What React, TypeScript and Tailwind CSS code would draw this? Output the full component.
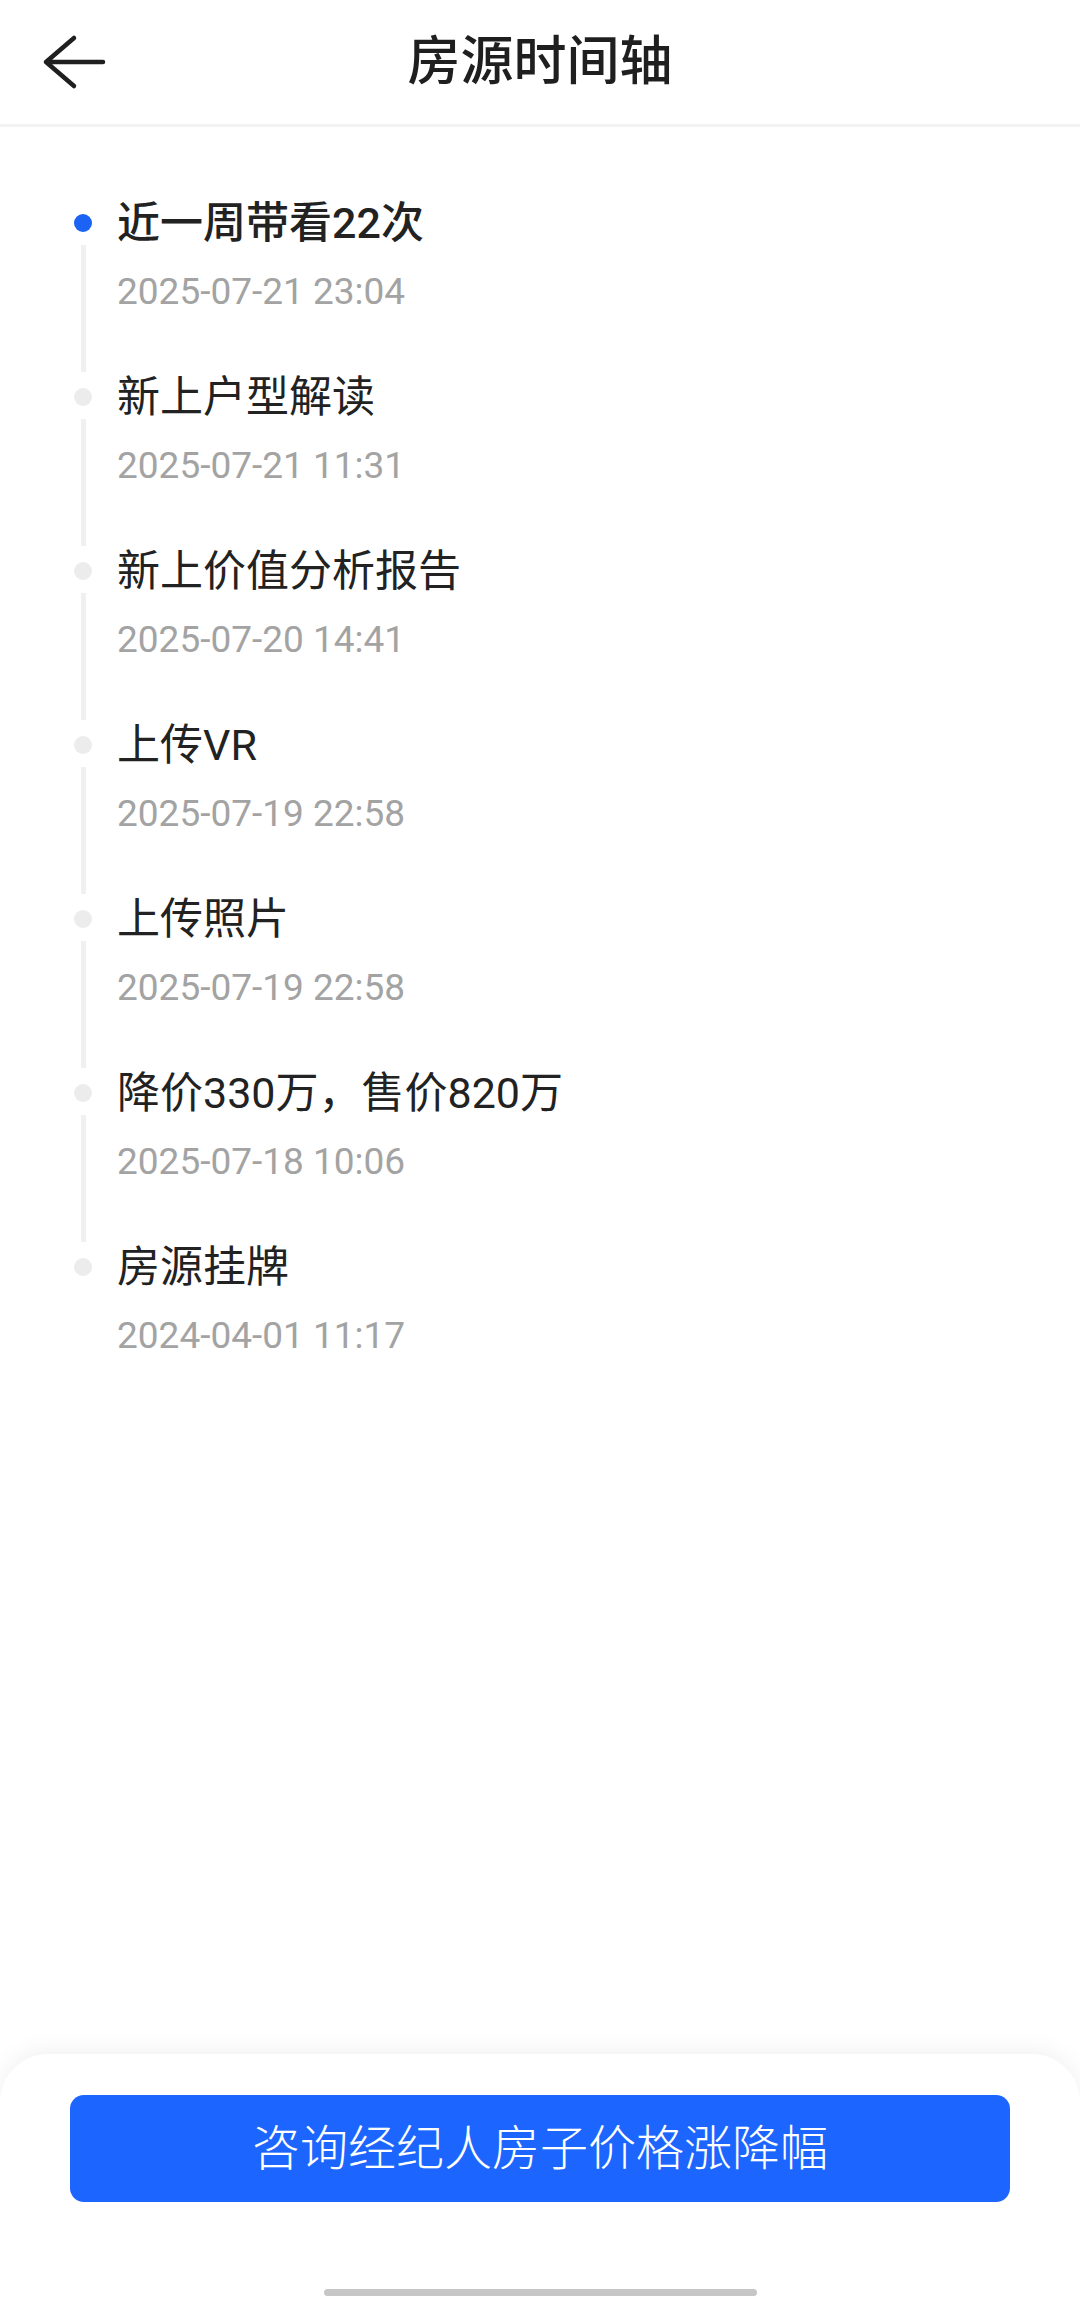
import React from "react";

const items = [
  { title: "近一周带看22次", date: "2025-07-21 23:04", active: true },
  { title: "新上户型解读", date: "2025-07-21 11:31" },
  { title: "新上价值分析报告", date: "2025-07-20 14:41" },
  { title: "上传VR", date: "2025-07-19 22:58" },
  { title: "上传照片", date: "2025-07-19 22:58" },
  { title: "降价330万，售价820万", date: "2025-07-18 10:06" },
  { title: "房源挂牌", date: "2024-04-01 11:17" },
];

const font = { fontFamily: "Roboto, 'Noto Sans CJK SC', sans-serif" };

export default function App() {
  return (
    <div className="w-[1080px] h-[2299px] bg-white flex flex-col overflow-hidden" style={font}>
      <header className="h-[127px] border-b-[3px] border-[#f3f3f3] grid grid-cols-[1fr_auto_1fr] items-center">
        <div className="pl-[42px] flex items-center">
          <svg width="64" height="56" viewBox="0 0 64 56" fill="none" stroke="#1f1f1f" strokeWidth="4.5" strokeLinecap="round" strokeLinejoin="round">
            <path d="M4 28 H61 M4 28 L32 4 M4 28 L32 52" />
          </svg>
        </div>
        <h1 className="text-[53px] font-medium text-[#1f1f1f] leading-none">房源时间轴</h1>
        <div />
      </header>

      <main className="flex-1 pt-[70px] pl-[74px]">
        {items.map((it, i) => {
          const last = i === items.length - 1;
          return (
            <div key={i} className="flex h-[174px]">
              <div className="w-[18px] flex flex-col items-center">
                <div className={`mt-[17px] w-[18px] h-[18px] rounded-full ${it.active ? "bg-[#1a63f5]" : "bg-[#ececec]"}`} />
                {!last && <div className="mt-[13px] w-[5px] flex-1 bg-[#f0f0f0] mb-[-1px]" />}
              </div>
              <div className="ml-[25px] flex flex-col">
                <div className={`text-[43px] leading-[52px] text-[#222222] ${it.active ? "font-medium" : "font-normal"}`}>{it.title}</div>
                <div className="mt-[21px] text-[37px] leading-[44px] text-[#a3a3a3]">{it.date}</div>
              </div>
            </div>
          );
        })}
      </main>

      <footer className="h-[245px] rounded-t-[48px] bg-white shadow-[0_-4px_24px_rgba(0,0,0,0.06)] pt-[41px] px-[70px] flex flex-col">
        <button className="h-[107px] w-full rounded-[14px] bg-[#1c66ff] text-white text-[48px] font-light">
          咨询经纪人房子价格涨降幅
        </button>
        <div className="mt-[87px] mx-auto w-[433px] h-[7px] rounded-full bg-[#c6c6c6]" />
      </footer>
    </div>
  );
}
